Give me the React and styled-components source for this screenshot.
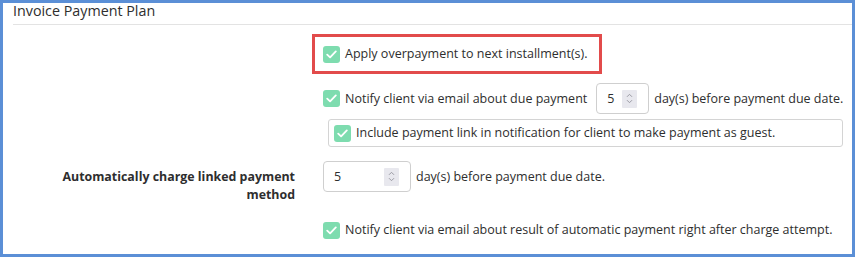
import React from "react";
import styled, { createGlobalStyle } from "styled-components";

const GlobalStyles = createGlobalStyle`
  html, body {
    margin: 0;
    padding: 0;
    background: #ffffff;
  }
  body {
    font-family: "Open Sans", "Noto Sans", sans-serif;
    color: #2e2e2e;
  }
`;

const CheckIcon = () => (
  <svg width="11" height="9" viewBox="0 0 11 9" fill="none">
    <path d="M1.2 4.6 L4.1 7.4 L9.8 1.4" stroke="#ffffff" strokeWidth="1.8" strokeLinecap="round" strokeLinejoin="round" />
  </svg>
);

const Checkbox = () => (
  <Box>
    <CheckIcon />
  </Box>
);

const SpinIcon = () => (
  <svg width="7" height="11" viewBox="0 0 7 11" fill="none">
    <path d="M1 3.8 L3.5 1.3 L6 3.8" stroke="#9a9aa3" strokeWidth="1" />
    <path d="M1 7.2 L3.5 9.7 L6 7.2" stroke="#9a9aa3" strokeWidth="1" />
  </svg>
);

const NumberInput = ({ value, wide }) => (
  <Input $wide={wide}>
    <span>{value}</span>
    <Spinner>
      <SpinIcon />
    </Spinner>
  </Input>
);

const App = () => {
  return (
    <Frame>
      <GlobalStyles />
      <Title>Invoice Payment Plan</Title>
      <Form>
        <Label />
        <Controls>
          <Highlight>
            <Checkbox />
            <Text>Apply overpayment to next installment(s).</Text>
          </Highlight>
        </Controls>

        <Label />
        <Controls>
          <Line>
            <Checkbox />
            <Text>Notify client via email about due payment</Text>
            <Gap $w={9} />
            <NumberInput value="5" />
            <Gap $w={5} />
            <Text>day(s) before payment due date.</Text>
          </Line>
          <Nested>
            <Checkbox />
            <Text>Include payment link in notification for client to make payment as guest.</Text>
          </Nested>
        </Controls>

        <Label $bold>Automatically charge linked payment method</Label>
        <Controls $top={14}>
          <Line>
            <NumberInput value="5" wide />
            <Gap $w={5} />
            <Text>day(s) before payment due date.</Text>
          </Line>
          <Line $top={29}>
            <Checkbox />
            <Text>Notify client via email about result of automatic payment right after charge attempt.</Text>
          </Line>
        </Controls>
      </Form>
    </Frame>
  );
};

const Frame = styled.div`
  box-sizing: border-box;
  width: 855px;
  height: 257px;
  border: 3px solid #5b8fd6;
  background: #ffffff;
  overflow: hidden;
`;

const Title = styled.div`
  margin-left: 10px;
  height: 21px;
  border-bottom: 1px solid #e3e3e3;
  font-size: 14.3px;
  line-height: 16px;
`;

const Form = styled.div`
  display: grid;
  grid-template-columns: 292px 1fr;
  column-gap: 28px;
  align-items: start;
  padding-top: 9px;
`;

const Label = styled.div`
  text-align: right;
  font-size: 12.4px;
  line-height: 18px;
  font-weight: ${(p) => (p.$bold ? 700 : 400)};
  padding-top: 21px;
  padding-left: 40px;
`;

const Controls = styled.div`
  display: flex;
  flex-direction: column;
  align-items: flex-start;
  margin-top: ${(p) => p.$top || 0}px;
`;

const Highlight = styled.div`
  display: flex;
  align-items: center;
  margin-left: -11px;
  height: 34px;
  padding: 0 11px 0 8px;
  border: 3px solid #e24b4b;
  margin-bottom: 9px;
`;

const Line = styled.div`
  display: flex;
  align-items: center;
  margin-top: ${(p) => p.$top || 0}px;
`;

const Nested = styled.div`
  box-sizing: border-box;
  display: flex;
  align-items: center;
  align-self: stretch;
  height: 28px;
  margin: 5px 9px 0 5px;
  padding-left: 5px;
  border: 1px solid #d4d4d4;
  border-radius: 3px;
`;

const Box = styled.span`
  display: inline-flex;
  align-items: center;
  justify-content: center;
  flex: none;
  width: 17px;
  height: 17px;
  margin-right: 5px;
  border-radius: 3px;
  background: #7edcaf;
`;

const Text = styled.span`
  font-size: 12.5px;
  line-height: 18px;
  white-space: nowrap;
`;

const Gap = styled.span`
  display: inline-block;
  width: ${(p) => p.$w}px;
`;

const Input = styled.div`
  box-sizing: border-box;
  display: flex;
  align-items: center;
  justify-content: space-between;
  width: ${(p) => (p.$wide ? 88 : 53)}px;
  height: 31px;
  padding: 0 11px 0 10px;
  border: 1px solid #cfcfcf;
  border-radius: 4px;
  font-size: 12.5px;
  background: #ffffff;
`;

const Spinner = styled.span`
  display: inline-flex;
  align-items: center;
  justify-content: center;
  width: 15px;
  height: 18px;
  background: #e8e8ee;
  border-radius: 1px;
`;

export default App;
